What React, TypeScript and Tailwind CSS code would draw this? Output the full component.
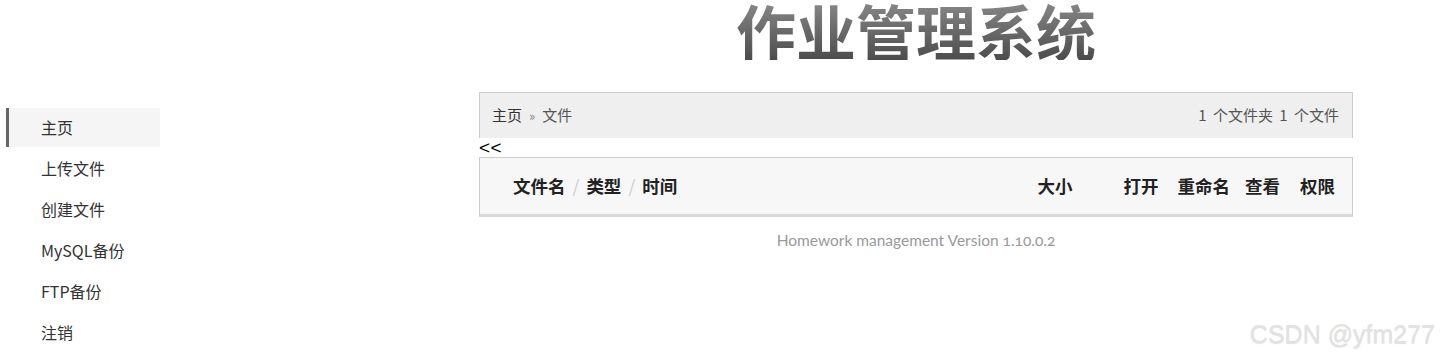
import React from "react";

const cjk = { fontFamily: '"Noto Sans CJK SC", "Noto Sans", sans-serif' };

export default function App() {
  const nav = ["主页", "上传文件", "创建文件", "MySQL备份", "FTP备份", "注销"];
  return (
    <div className="relative w-[1446px] h-[359px] bg-white" style={cjk}>
      <div className="flex">
        <div className="w-[479px] shrink-0 pl-[6px] pt-[108px]">
          <ul className="w-[154px]">
            {nav.map((n, i) => (
              <li
                key={n}
                className={
                  "h-[39px] mb-[2px] flex items-center pl-[32px] pb-[2px] text-[16px] text-[#333] " +
                  (i === 0 ? "bg-[#f5f5f5] border-l-[3px] border-[#666]" : "border-l-[3px] border-transparent")
                }
              >
                {n}
              </li>
            ))}
          </ul>
        </div>
        <div className="w-[874px] shrink-0">
          <div className="h-[92px] flex justify-center items-start">
            <h1 className="text-[60px] leading-[60px] font-bold bg-gradient-to-b from-[#8a8a8a] to-[#4c4c4c] bg-clip-text text-transparent">
              作业管理系统
            </h1>
          </div>
          <div className="h-[46px] bg-[#efefef] border border-b-0 border-[#cccccc] flex items-center justify-between pl-[12px] pr-[13px] text-[15px]">
            <div className="text-[#333] flex items-center">
              <span>主页</span>
              <span className="text-[#888] text-[13px] mx-[7px]">»</span>
              <span className="text-[#555]">文件</span>
            </div>
            <div className="text-[#555] [word-spacing:3px]">1 个文件夹 1 个文件</div>
          </div>
          <div
            className="h-[19px] leading-[19px] text-[19px] text-black tracking-[0.5px]"
            style={{ fontFamily: '"Liberation Sans", sans-serif' }}
          >
            &lt;&lt;
          </div>
          <div className="h-[60px] bg-[#f7f7f7] border border-[#cccccc] border-b-[3px] border-b-[#d9d9d9] flex items-center pl-[33px] pr-[17px] text-[17.5px] font-bold text-[#222]">
            <span>文件名</span>
            <span className="text-[#cccccc] font-normal mx-[7px]">/</span>
            <span>类型</span>
            <span className="text-[#cccccc] font-normal mx-[7px]">/</span>
            <span>时间</span>
            <span className="flex-1" />
            <span>大小</span>
            <span className="ml-[51px]">打开</span>
            <span className="ml-[19px]">重命名</span>
            <span className="ml-[15px]">查看</span>
            <span className="ml-[20px]">权限</span>
          </div>
          <div
            className="mt-[12px] text-center text-[15.5px] text-[#999] oldstyle-nums"
            style={{ fontFamily: 'Lato, "Open Sans", sans-serif' }}
          >
            Homework management Version 1.10.0.2
          </div>
        </div>
      </div>
      <div
        className="absolute right-[11px] top-[316px] text-[25px] text-[#e2e2e2] [text-shadow:0_1px_1px_rgba(0,0,0,0.12)]"
        style={{ fontFamily: '"Liberation Sans", Arial, sans-serif' }}
      >
        CSDN @yfm277
      </div>
    </div>
  );
}
